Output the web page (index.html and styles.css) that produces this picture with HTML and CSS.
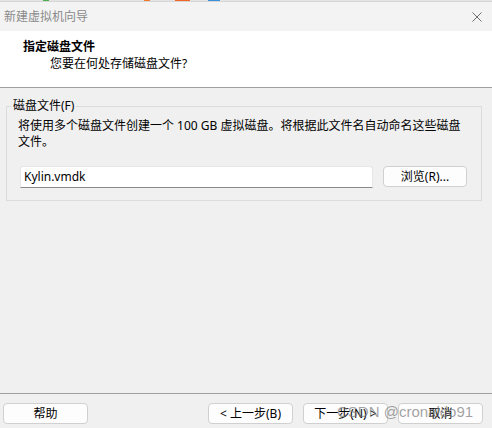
FILE: index.html
```html
<!DOCTYPE html>
<html lang="zh-CN">
<head>
<meta charset="utf-8">
<title>新建虚拟机向导</title>
<link rel="stylesheet" href="styles.css">
</head>
<body>
<div class="window">
  <div class="strip"></div>
  <div class="titlebar">
    <span class="title">新建虚拟机向导</span>
    <svg class="close" width="10" height="10" viewBox="0 0 10 10"><path d="M0.5 0.5 L9.5 9.5 M9.5 0.5 L0.5 9.5" stroke="#6e6e6e" stroke-width="1" fill="none"/></svg>
  </div>
  <div class="header">
    <div class="h-title">指定磁盘文件</div>
    <div class="h-sub">您要在何处存储磁盘文件?</div>
  </div>
  <div class="main">
    <fieldset class="group">
      <legend class="legend">磁盘文件(F)</legend>
      <p class="desc">将使用多个磁盘文件创建一个 100 GB 虚拟磁盘。将根据此文件名自动命名这些磁盘文件。</p>
      <div class="row">
        <div class="input">Kylin.vmdk</div>
        <div class="btn browse">浏览(R)...</div>
      </div>
    </fieldset>
  </div>
  <div class="footer">
    <div class="btn">帮助</div>
    <div class="right">
      <div class="btn">&lt; 上一步(B)</div>
      <div class="btn">下一步(N) &gt;</div>
      <div class="btn">取消</div>
    </div>
  </div>
  <div class="watermark">CSDN @cronaldo91</div>
</div>
</body>
</html>
```
FILE: styles.css
```css
* { box-sizing: border-box; }
html, body { margin: 0; padding: 0; }
body {
  background: #f0f0f0;
  font-family: "Noto Sans", "Noto Sans CJK SC", sans-serif;
  font-size: 12px;
  color: #000;
}
.window {
  position: relative;
  width: 492px;
  height: 428px;
  display: flex;
  flex-direction: column;
  overflow: hidden;
}
.strip {
  height: 2px;
  background: linear-gradient(to right,
    #e4e4e4 0, #e4e4e4 43px, #4caf50 43px, #4caf50 49px,
    #e4e4e4 49px, #e4e4e4 144px, #f07a2a 144px, #f07a2a 150px,
    #e4e4e4 150px, #e4e4e4 175px, #f26522 175px, #f26522 190px,
    #e4e4e4 190px, #e4e4e4 208px, #3a8fd8 208px, #3a8fd8 220px,
    #e4e4e4 220px);
  border-bottom: 1px solid #d6d6d6;
}
.titlebar {
  height: 29px;
  background: #f3f3f3;
  display: flex;
  align-items: center;
  justify-content: space-between;
  padding: 0 10px 0 4px;
}
.title {
  color: #8a8a8a;
  font-size: 12px;
  line-height: 16px;
}
.close { display: block; margin-top: 1px; }
.header {
  height: 57px;
  background: #fff;
  border-bottom: 1px solid #a0a0a0;
  padding-top: 8px;
}
.h-title {
  font-weight: bold;
  line-height: 16px;
  padding-left: 23px;
}
.h-sub {
  line-height: 16px;
  padding-left: 50px;
  margin-top: 1px;
}
.main {
  flex: 1;
  padding-top: 10px;
}
.group {
  margin: 0 10px 0 6px;
  border: 1px solid #dcdcdc;
  padding: 0 10px 12px 4px;
  min-width: 0;
}
.legend {
  padding: 0 2px;
  line-height: 16px;
  color: #000;
}
.desc {
  margin: 4px 8px 0 7px;
  line-height: 16px;
}
.row {
  display: flex;
  align-items: flex-start;
  margin-top: 16px;
  margin-left: 9px;
}
.input {
  width: 353px;
  height: 22px;
  background: #fff;
  border: 1px solid #e6e6e6;
  border-bottom: 1px solid #8a8a8a;
  border-radius: 3px 3px 0 0;
  padding: 0 0 0 3px;
  line-height: 19px;
  font-size: 12px;
}
.btn {
  width: 85px;
  height: 21px;
  background: #fdfdfd;
  border: 1px solid #d0d0d0;
  border-radius: 4px;
  display: flex;
  align-items: center;
  justify-content: center;
  line-height: 16px;
}
.browse {
  width: 84px;
  margin-left: 10px;
}
.footer {
  height: 35px;
  border-top: 1px solid #a0a0a0;
  display: flex;
  align-items: flex-start;
  justify-content: space-between;
  padding: 9px 9px 0 3px;
}
.right {
  display: flex;
  gap: 10px;
}
.watermark {
  position: absolute;
  left: 337px;
  top: 402px;
  font-family: "Liberation Sans", "Noto Sans", sans-serif;
  font-size: 15px;
  line-height: 20px;
  color: rgba(125, 125, 125, 0.72);
  white-space: nowrap;
}
```
